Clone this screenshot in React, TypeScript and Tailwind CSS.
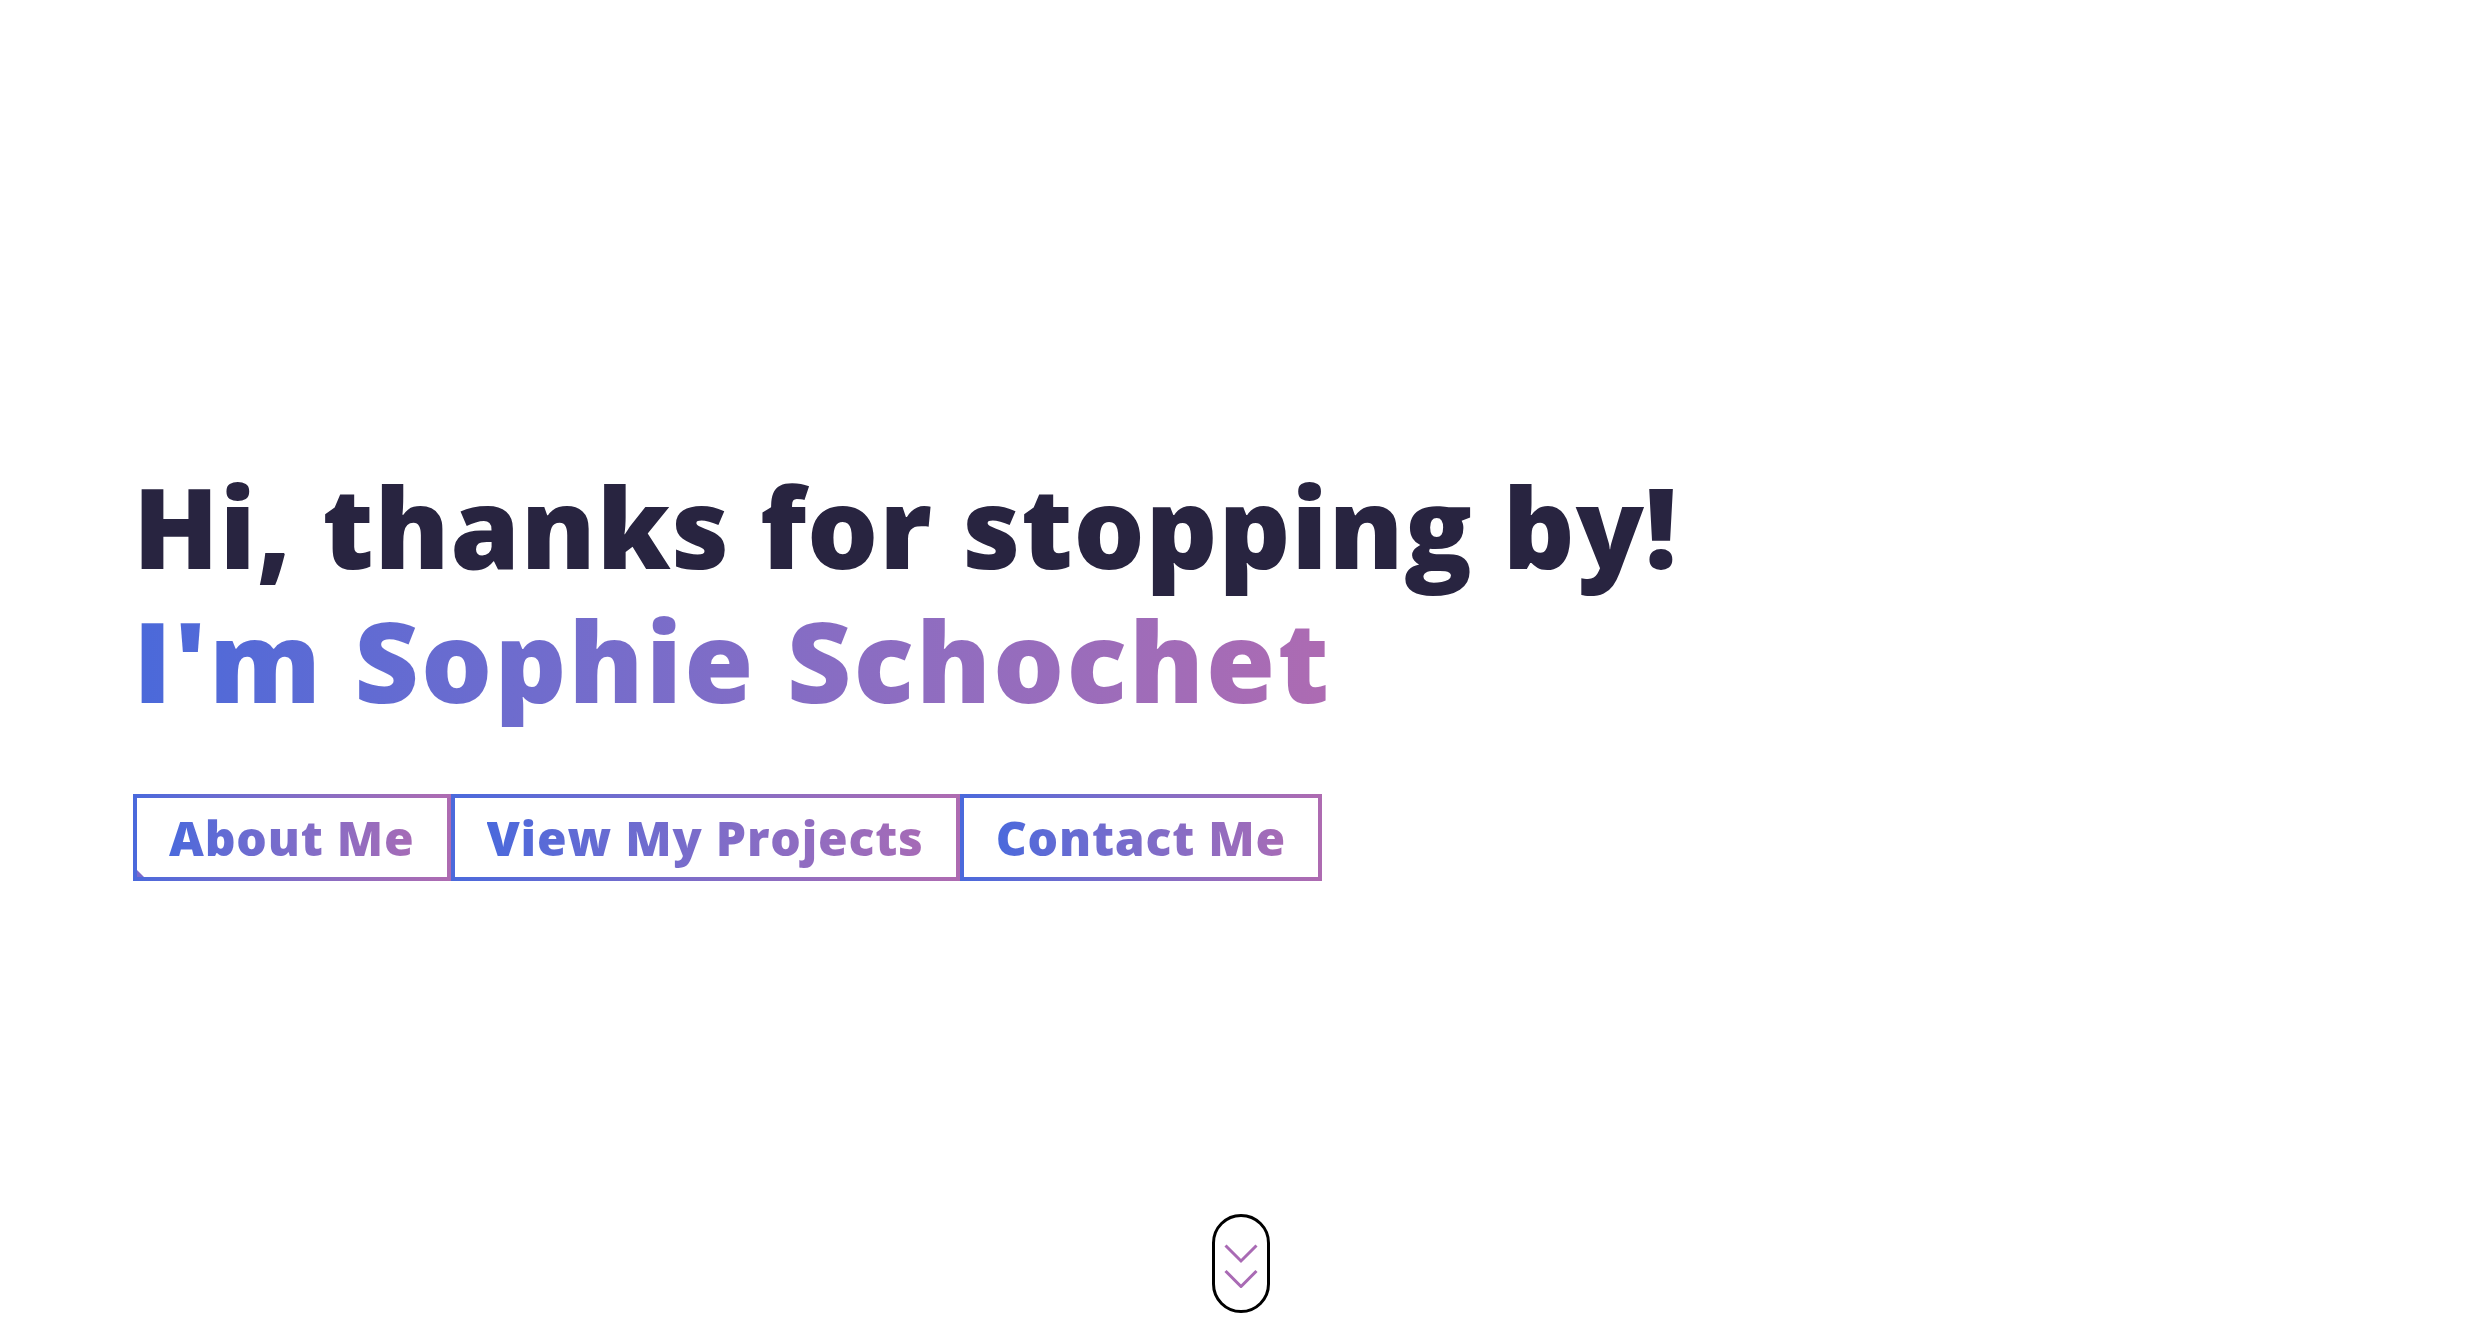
import React from "react";

function GradientButton({ label, corner }: { label: string; corner?: boolean }) {
  return (
    <a
      href="#"
      className="relative block bg-linear-to-r from-[#4a69dc] to-[#ae6bb1] p-[4px] no-underline"
    >
      <span className="flex h-[79px] items-center bg-white px-[32px]">
        <span className="inline-block bg-linear-to-r from-[#4a69dc] to-[#a66bb6] bg-clip-text text-[48px] font-extrabold leading-[65px] tracking-[0.8px] text-transparent">
          {label}
        </span>
      </span>
      {corner && (
        <span className="absolute bottom-[4px] left-[4px] h-0 w-0 border-b-[7px] border-r-[7px] border-b-[#7c6acb] border-r-transparent" />
      )}
    </a>
  );
}

export default function App() {
  return (
    <div className="flex h-screen flex-col bg-white font-['Open_Sans',sans-serif] text-[#282440]">
      <main className="pl-[133px] pt-[459px]">
        <h1 className="text-[112px] font-extrabold leading-[134px]">
          <span className="block tracking-[0.8px]">Hi, thanks for stopping by!</span>
          <span className="inline-block bg-linear-to-r from-[#4a69da] to-[#ad6bb2] bg-clip-text tracking-[2.1px] text-transparent">
            I'm Sophie Schochet
          </span>
        </h1>
        <nav className="mt-[67px] flex">
          <GradientButton label="About Me" corner />
          <GradientButton label="View My Projects" />
          <GradientButton label="Contact Me" />
        </nav>
      </main>
      <div className="flex-1" />
      <div className="mb-[7px] flex justify-center pr-[3px]">
        <div className="flex h-[99px] w-[58px] items-center justify-center rounded-full border-[3px] border-black pt-[5px]">
          <svg width="34" height="44" viewBox="0 0 34 44" fill="none" stroke="#a96ab4" strokeWidth="3">
            <polyline points="1.5,1.5 17,17 32.5,1.5" />
            <polyline points="1.5,27 17,42.5 32.5,27" />
          </svg>
        </div>
      </div>
    </div>
  );
}
